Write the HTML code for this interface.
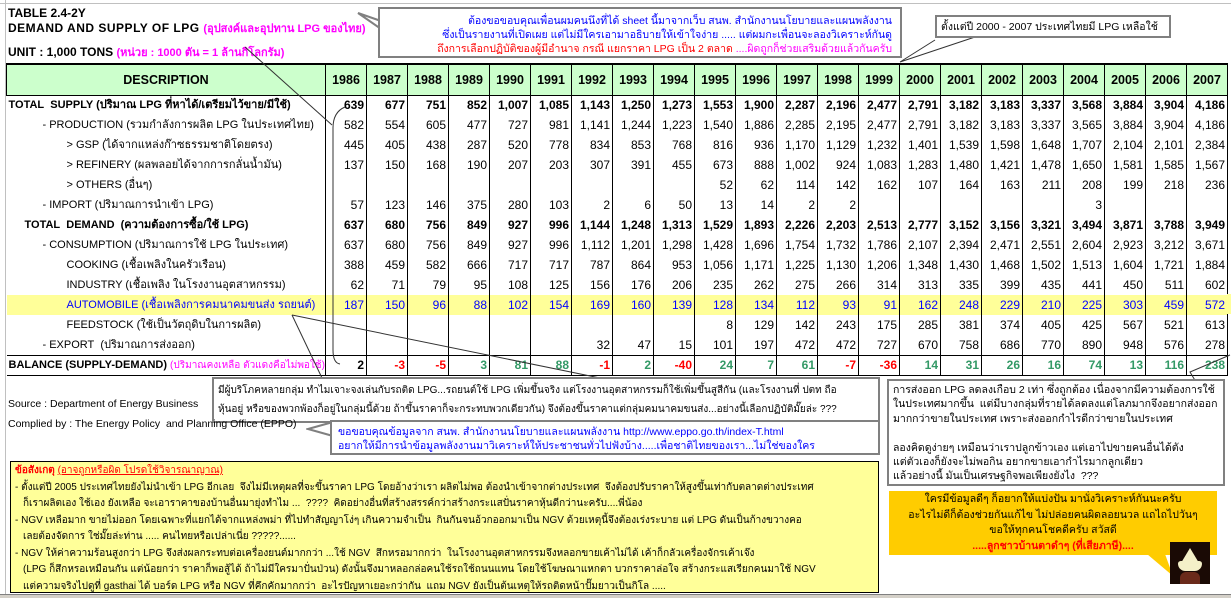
<!DOCTYPE html>
<html><head><meta charset="utf-8">
<style>
*{margin:0;padding:0;box-sizing:border-box}
body{width:1231px;height:598px;overflow:hidden;background:#fff;font-family:"Liberation Sans","DejaVu Sans",sans-serif;position:relative;color:#000}
.abs{position:absolute}
.nw div,.nw{white-space:nowrap}
table{position:absolute;left:6px;top:63px;width:1221px;border-collapse:collapse;table-layout:fixed;font-size:12px}
td{height:20px;border-left:1px solid #000;border-right:1px solid #000;text-align:right;padding-right:2px;white-space:nowrap;overflow:hidden;line-height:18px}
td.d{text-align:left;border-left:none;padding-left:2px;font-size:11px}
tr.h td{height:31px;background:#ccffcc;font-weight:bold;text-align:center;border-top:2px solid #000;border-bottom:1px solid #000;font-size:12.5px;padding:0}
tr.h td.d{text-align:center;border-left:1px solid #000}
tr.b td{font-weight:bold}
tr.au td{background:#ffff99;color:#0000ff}
tr.bal td{border-top:1px solid #000;border-bottom:1px solid #000;font-weight:bold}
.r{color:#ff0000}.g{color:#339966}
.box{position:absolute;background:#fff;border:2px solid #808080;font-size:10.5px;line-height:16px;overflow:hidden}
.y div{height:16.5px;line-height:16.5px}
.rb div{height:14.4px;line-height:14.4px}
</style></head><body>
<div class="abs" style="left:0;top:0;width:1231px;height:4px;border-bottom:1px solid #c0c0c0"></div>
<div class="abs" style="left:5px;top:0;width:1px;height:598px;background:#c0c0c0"></div>

<div class="abs" style="left:8px;top:5px;font-size:12px;font-weight:bold;line-height:16px">TABLE 2.4-2Y</div>
<div class="abs nw" style="left:8px;top:20px;font-size:12px;font-weight:bold;line-height:16px;letter-spacing:.5px">DEMAND AND SUPPLY OF LPG <span style="color:#ff00ff;letter-spacing:0;font-size:11px">(อุปสงค์และอุปทาน LPG ของไทย)</span></div>
<div class="abs nw" style="left:8px;top:44px;font-size:12px;font-weight:bold;line-height:16px">UNIT : 1,000 TONS <span style="color:#ff00ff;font-size:11px">(หน่วย : 1000 ตัน = 1 ล้านกิโลกรัม)</span></div>

<table>
<colgroup><col style="width:319px"><col span="22" style="width:41px"></colgroup>
<tr class="h"><td class="d">DESCRIPTION</td><td>1986</td><td>1987</td><td>1988</td><td>1989</td><td>1990</td><td>1991</td><td>1992</td><td>1993</td><td>1994</td><td>1995</td><td>1996</td><td>1997</td><td>1998</td><td>1999</td><td>2000</td><td>2001</td><td>2002</td><td>2003</td><td>2004</td><td>2005</td><td>2006</td><td>2007</td></tr>
<tr class="b"><td class="d">TOTAL&nbsp; SUPPLY (ปริมาณ LPG ที่หาได้/เตรียมไว้ขาย/มีใช้)</td><td>639</td><td>677</td><td>751</td><td>852</td><td>1,007</td><td>1,085</td><td>1,143</td><td>1,250</td><td>1,273</td><td>1,553</td><td>1,900</td><td>2,287</td><td>2,196</td><td>2,477</td><td>2,791</td><td>3,182</td><td>3,183</td><td>3,337</td><td>3,568</td><td>3,884</td><td>3,904</td><td>4,186</td></tr>
<tr><td class="d" style="padding-left:36px">- PRODUCTION (รวมกำลังการผลิต LPG ในประเทศไทย)</td><td>582</td><td>554</td><td>605</td><td>477</td><td>727</td><td>981</td><td>1,141</td><td>1,244</td><td>1,223</td><td>1,540</td><td>1,886</td><td>2,285</td><td>2,195</td><td>2,477</td><td>2,791</td><td>3,182</td><td>3,183</td><td>3,337</td><td>3,565</td><td>3,884</td><td>3,904</td><td>4,186</td></tr>
<tr><td class="d" style="padding-left:60px">&gt; GSP (ได้จากแหล่งก๊าซธรรมชาติโดยตรง)</td><td>445</td><td>405</td><td>438</td><td>287</td><td>520</td><td>778</td><td>834</td><td>853</td><td>768</td><td>816</td><td>936</td><td>1,170</td><td>1,129</td><td>1,232</td><td>1,401</td><td>1,539</td><td>1,598</td><td>1,648</td><td>1,707</td><td>2,104</td><td>2,101</td><td>2,384</td></tr>
<tr><td class="d" style="padding-left:60px">&gt; REFINERY (ผลพลอยได้จากการกลั่นน้ำมัน)</td><td>137</td><td>150</td><td>168</td><td>190</td><td>207</td><td>203</td><td>307</td><td>391</td><td>455</td><td>673</td><td>888</td><td>1,002</td><td>924</td><td>1,083</td><td>1,283</td><td>1,480</td><td>1,421</td><td>1,478</td><td>1,650</td><td>1,581</td><td>1,585</td><td>1,567</td></tr>
<tr><td class="d" style="padding-left:60px">&gt; OTHERS (อื่นๆ)</td><td></td><td></td><td></td><td></td><td></td><td></td><td></td><td></td><td></td><td>52</td><td>62</td><td>114</td><td>142</td><td>162</td><td>107</td><td>164</td><td>163</td><td>211</td><td>208</td><td>199</td><td>218</td><td>236</td></tr>
<tr><td class="d" style="padding-left:36px">- IMPORT (ปริมาณการนำเข้า LPG)</td><td>57</td><td>123</td><td>146</td><td>375</td><td>280</td><td>103</td><td>2</td><td>6</td><td>50</td><td>13</td><td>14</td><td>2</td><td>2</td><td></td><td></td><td></td><td></td><td></td><td>3</td><td></td><td></td><td></td></tr>
<tr class="b"><td class="d" style="padding-left:18px">TOTAL&nbsp; DEMAND&nbsp; (ความต้องการซื้อ/ใช้ LPG)</td><td>637</td><td>680</td><td>756</td><td>849</td><td>927</td><td>996</td><td>1,144</td><td>1,248</td><td>1,313</td><td>1,529</td><td>1,893</td><td>2,226</td><td>2,203</td><td>2,513</td><td>2,777</td><td>3,152</td><td>3,156</td><td>3,321</td><td>3,494</td><td>3,871</td><td>3,788</td><td>3,949</td></tr>
<tr><td class="d" style="padding-left:36px">- CONSUMPTION (ปริมาณการใช้ LPG ในประเทศ)</td><td>637</td><td>680</td><td>756</td><td>849</td><td>927</td><td>996</td><td>1,112</td><td>1,201</td><td>1,298</td><td>1,428</td><td>1,696</td><td>1,754</td><td>1,732</td><td>1,786</td><td>2,107</td><td>2,394</td><td>2,471</td><td>2,551</td><td>2,604</td><td>2,923</td><td>3,212</td><td>3,671</td></tr>
<tr><td class="d" style="padding-left:60px">COOKING (เชื้อเพลิงในครัวเรือน)</td><td>388</td><td>459</td><td>582</td><td>666</td><td>717</td><td>717</td><td>787</td><td>864</td><td>953</td><td>1,056</td><td>1,171</td><td>1,225</td><td>1,130</td><td>1,206</td><td>1,348</td><td>1,430</td><td>1,468</td><td>1,502</td><td>1,513</td><td>1,604</td><td>1,721</td><td>1,884</td></tr>
<tr><td class="d" style="padding-left:60px">INDUSTRY (เชื้อเพลิง ในโรงงานอุตสาหกรรม)</td><td>62</td><td>71</td><td>79</td><td>95</td><td>108</td><td>125</td><td>156</td><td>176</td><td>206</td><td>235</td><td>262</td><td>275</td><td>266</td><td>314</td><td>313</td><td>335</td><td>399</td><td>435</td><td>441</td><td>450</td><td>511</td><td>602</td></tr>
<tr class="au"><td class="d" style="padding-left:60px">AUTOMOBILE (เชื้อเพลิงการคมนาคมขนส่ง รถยนต์)</td><td>187</td><td>150</td><td>96</td><td>88</td><td>102</td><td>154</td><td>169</td><td>160</td><td>139</td><td>128</td><td>134</td><td>112</td><td>93</td><td>91</td><td>162</td><td>248</td><td>229</td><td>210</td><td>225</td><td>303</td><td>459</td><td>572</td></tr>
<tr><td class="d" style="padding-left:60px">FEEDSTOCK (ใช้เป็นวัตถุดิบในการผลิต)</td><td></td><td></td><td></td><td></td><td></td><td></td><td></td><td></td><td></td><td>8</td><td>129</td><td>142</td><td>243</td><td>175</td><td>285</td><td>381</td><td>374</td><td>405</td><td>425</td><td>567</td><td>521</td><td>613</td></tr>
<tr><td class="d" style="padding-left:36px">- EXPORT&nbsp; (ปริมาณการส่งออก)</td><td></td><td></td><td></td><td></td><td></td><td></td><td>32</td><td>47</td><td>15</td><td>101</td><td>197</td><td>472</td><td>472</td><td>727</td><td>670</td><td>758</td><td>686</td><td>770</td><td>890</td><td>948</td><td>576</td><td>278</td></tr>
<tr class="bal"><td class="d">BALANCE (SUPPLY-DEMAND) <span style="color:#ff00ff;font-weight:normal;font-size:10px">(ปริมาณคงเหลือ ตัวแดงคือไม่พอใช้)</span></td><td>2</td><td class="r">-3</td><td class="r">-5</td><td class="g">3</td><td class="g">81</td><td class="g">88</td><td class="r">-1</td><td class="g">2</td><td class="r">-40</td><td class="g">24</td><td class="g">7</td><td class="g">61</td><td class="r">-7</td><td class="r">-36</td><td class="g">14</td><td class="g">31</td><td class="g">26</td><td class="g">16</td><td class="g">74</td><td class="g">13</td><td class="g">116</td><td class="g">238</td></tr>
</table>
<div class="abs" style="left:1227px;top:294px;width:4px;height:20px;background:#ffff99"></div>

<svg class="abs" style="left:0;top:0" width="1231" height="598">
<g stroke="#333" stroke-width="1" fill="none">
<path d="M245 47 L332 125"/>
<path d="M345 107 Q333 112 333 128 L333 350 Q333 363 340 364"/>
<path d="M292 315 L322 378"/>
<path d="M292 315 L600 378"/>
<path d="M1196 382 L1190 372 L1230 355"/>
<path d="M900 62 L935 40 M900 62 L975 37"/>
</g>
</svg>

<svg class="abs" style="left:355px;top:5px" width="30" height="30"><path d="M3 8 L26 16 L26 24 Z" fill="#fff" stroke="#808080" stroke-width="2"/></svg>
<div class="box nw" style="left:378px;top:7px;width:524px;height:51px;text-align:right;padding:5px 8px 0 0;line-height:15px;font-size:10.5px">
<div style="color:#0000ff;height:14px">ต้องขอขอบคุณเพื่อนผมคนนึงที่ได้ sheet นี้มาจากเว็บ สนพ. สำนักงานนโยบายและแผนพลังงาน</div>
<div style="color:#0000ff;height:14px">ซึ่งเป็นรายงานที่เปิดเผย แต่ไม่มีใครเอามาอธิบายให้เข้าใจง่าย ..... แต่ผมกะเพื่อนจะลองวิเคราะห์กันดู</div>
<div style="height:14px"><span style="color:#ff0000">ถึงการเลือกปฏิบัติของผู้มีอำนาจ กรณี แยกราคา LPG เป็น 2 ตลาด</span> <span style="color:#ff00ff">....ผิดถูกก็ช่วยเสริมด้วยแล้วกันครับ</span></div>
</div>

<div class="box nw" style="left:935px;top:15px;width:236px;height:23px;padding:1px 4px;font-size:10.5px;line-height:18px">ตั้งแต่ปี 2000 - 2007 ประเทศไทยมี LPG เหลือใช้</div>

<div class="box nw" style="left:212px;top:377px;width:668px;height:46px;padding:2px 4px;font-size:10px;line-height:19px">
<div style="height:19px">มีผู้บริโภคหลายกลุ่ม ทำไมเจาะจงเล่นกับรถติด LPG...รถยนต์ใช้ LPG เพิ่มขึ้นจริง แต่โรงงานอุตสาหกรรมก็ใช้เพิ่มขึ้นสูสีกัน (และโรงงานที่ ปตท ถือ</div>
<div style="height:19px">หุ้นอยู่ หรือของพวกพ้องก็อยู่ในกลุ่มนี้ด้วย ถ้าขึ้นราคาก็จะกระทบพวกเดียวกัน) จึงต้องขึ้นราคาแต่กลุ่มคมนาคมขนส่ง...อย่างนี้เลือกปฏิบัติมั๊ยล่ะ ???</div>
</div>

<div class="abs nw" style="left:8px;top:398px;font-size:10.5px">Source : Department of Energy Business</div>
<div class="abs nw" style="left:8px;top:418px;font-size:10.5px">Complied by : The Energy Policy&nbsp; and Planning Office (EPPO)</div>

<svg class="abs" style="left:306px;top:418px" width="30" height="30"><path d="M2 11 L27 4 L27 18 Z" fill="#fff" stroke="#808080" stroke-width="2"/></svg>
<div class="box nw" style="left:330px;top:420px;width:550px;height:35px;padding:3px 6px;color:#0000ff;font-size:10.5px;line-height:14px"><div style="height:14px">ขอขอบคุณข้อมูลจาก สนพ. สำนักงานนโยบายและแผนพลังงาน http://www.eppo.go.th/index-T.html</div><div style="height:14px">อยากให้มีการนำข้อมูลพลังงานมาวิเคราะห์ให้ประชาชนทั่วไปฟังบ้าง.....เพื่อชาติไทยของเรา...ไม่ใช่ของใคร</div></div>

<div class="abs nw y" style="left:10px;top:461px;width:869px;height:132px;background:#ffff99;border:1px solid #000;padding:1px 4px;font-size:10px;overflow:hidden">
<div><span style="color:#ff0000;font-weight:bold">ข้อสังเกตุ</span> <span style="color:#ff0000;text-decoration:underline">(อาจถูกหรือผิด โปรดใช้วิจารณาญาณ)</span></div>
<div>- ตั้งแต่ปี 2005 ประเทศไทยยังไม่นำเข้า LPG อีกเลย&nbsp; จึงไม่มีเหตุผลที่จะขึ้นราคา LPG โดยอ้างว่าเรา ผลิตไม่พอ ต้องนำเข้าจากต่างประเทศ&nbsp; จึงต้องปรับราคาให้สูงขึ้นเท่ากับตลาดต่างประเทศ</div>
<div style="padding-left:8px">ก็เราผลิตเอง ใช้เอง ยังเหลือ จะเอาราคาของบ้านอื่นมายุ่งทำไม ...&nbsp; ????&nbsp; คิดอย่างอื่นที่สร้างสรรค์กว่าสร้างกระแสปั่นราคาหุ้นดีกว่านะครับ....พี่น้อง</div>
<div>- NGV เหลือมาก ขายไม่ออก โดยเฉพาะที่แยกได้จากแหล่งพม่า ที่ไปทำสัญญาโง่ๆ เกินความจำเป็น&nbsp; กินกันจนอ้วกออกมาเป็น NGV ด้วยเหตุนี้จึงต้องเร่งระบาย แต่ LPG ดันเป็นก้างขวางคอ</div>
<div style="padding-left:8px">เลยต้องจัดการ ใช่มั๊ยล่ะท่าน ..... คนไทยหรือเปล่าเนี่ย ?????......</div>
<div>- NGV ให้ค่าความร้อนสูงกว่า LPG จึงส่งผลกระทบต่อเครื่องยนต์มากกว่า ...ใช้ NGV&nbsp; สึกหรอมากกว่า&nbsp; ในโรงงานอุตสาหกรรมจึงหลอกขายเค้าไม่ได้ เค้าก็กลัวเครื่องจักรเค้าเจ๊ง</div>
<div style="padding-left:8px">(LPG ก็สึกหรอเหมือนกัน แต่น้อยกว่า ราคาก็พอสู้ได้ ถ้าไม่มีใครมาปั่นป่วน) ดังนั้นจึงมาหลอกล่อคนใช้รถใช้ถนนแทน โดยใช้โฆษณาแหกตา บวกราคาล่อใจ สร้างกระแสเรียกคนมาใช้ NGV</div>
<div style="padding-left:8px">แต่ความจริงไปดูที่ gasthai ได้ บอร์ด LPG หรือ NGV ที่คึกคักมากกว่า&nbsp; อะไรปัญหาเยอะกว่ากัน&nbsp; แถม NGV ยังเป็นต้นเหตุให้รถติดหน้าปั๊มยาวเป็นกิโล .....</div>
</div>

<div class="box nw rb" style="left:887px;top:379px;width:338px;height:107px;padding:2px 4px;font-size:10.5px">
<div>การส่งออก LPG ลดลงเกือบ 2 เท่า ซึ่งถูกต้อง เนื่องจากมีความต้องการใช้</div>
<div>ในประเทศมากขึ้น&nbsp; แต่มีบางกลุ่มที่รายได้ลดลงแต่โลภมากจึงอยากส่งออก</div>
<div>มากกว่าขายในประเทศ เพราะส่งออกกำไรดีกว่าขายในประเทศ</div>
<div></div>
<div>ลองคิดดูง่ายๆ เหมือนว่าเราปลูกข้าวเอง แต่เอาไปขายคนอื่นได้ตัง</div>
<div>แต่ตัวเองก็ยังจะไม่พอกิน อยากขายเอากำไรมากลูกเดียว</div>
<div>แล้วอย่างนี้ มันเป็นเศรษฐกิจพอเพียงยังไง&nbsp; ???</div>
</div>

<div class="abs nw" style="left:889px;top:491px;width:328px;height:64px;background:#ffcc00;text-align:center;font-size:10.5px;padding-top:1px;overflow:hidden"><div style="height:15.5px;line-height:15.5px">ใครมีข้อมูลดีๆ ก็อยากให้แบ่งปัน มานั่งวิเคราะห์กันนะครับ</div><div style="height:15.5px;line-height:15.5px">อะไรไม่ดีก็ต้องช่วยกันแก้ไข ไม่ปล่อยคนผิดลอยนวล แถไถไปวันๆ</div><div style="height:15.5px;line-height:15.5px">ขอให้ทุกคนโชคดีครับ สวัสดี</div><div style="height:15.5px;line-height:15.5px;color:#ff0000;font-weight:bold">.....ลูกชาวบ้านตาดำๆ (ที่เสียภาษี)....</div></div>
<svg class="abs" style="left:1145px;top:554px" width="30" height="25"><path d="M2 0 L20 0 L28 22 Z" fill="#ffcc00"/></svg>
<div class="abs" style="left:1170px;top:542px;width:40px;height:42px;background:#1a0a05;overflow:hidden">
<div style="position:absolute;left:11px;top:6px;width:0;height:0;border-left:9px solid transparent;border-right:9px solid transparent;border-bottom:15px solid #f4f0c8"></div>
<div style="position:absolute;left:8px;top:19px;width:24px;height:10px;background:#f4f0c8;border-radius:3px 3px 8px 8px"></div>
<div style="position:absolute;left:10px;top:30px;width:20px;height:12px;background:#6a2a1a;border-radius:6px 6px 0 0"></div>
</div>
<div class="abs" style="left:0;top:594px;width:1231px;height:4px;background:#d4d0c8;border-top:1px solid #808080"></div>
</body></html>
